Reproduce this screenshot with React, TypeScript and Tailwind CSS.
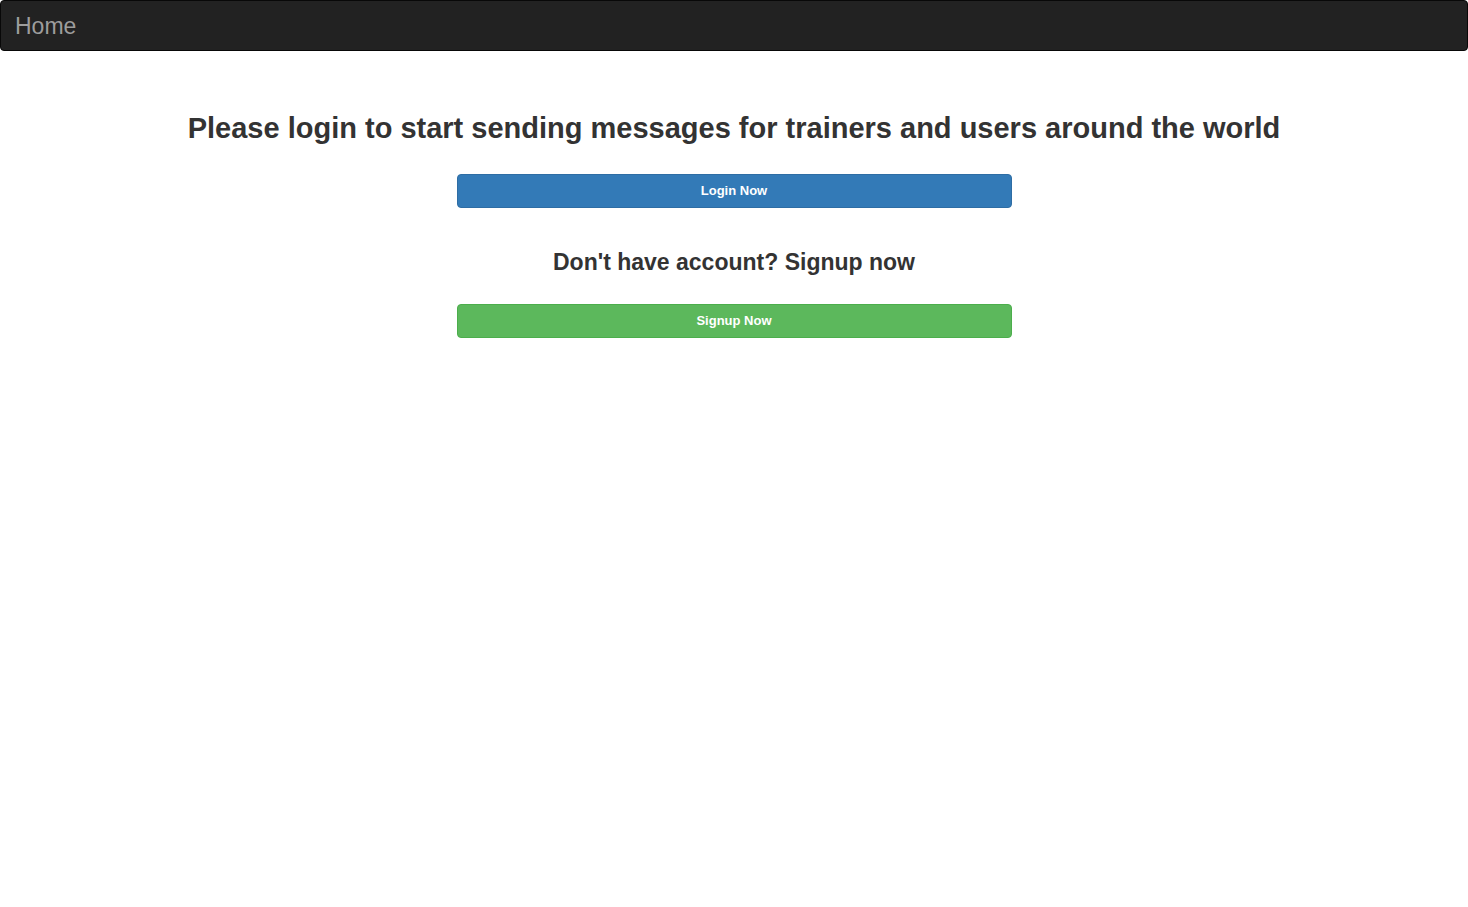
import React from "react";

export default function App() {
  return (
    <div className="min-h-screen bg-white text-[#333] font-['Liberation_Sans',Arial,sans-serif] text-[14px]">
      <nav className="h-[51px] bg-[#222] border border-[#080808] rounded-[4px] flex items-center">
        <a className="pl-[14px] text-[23px] leading-[20px] text-[#9d9d9d]">Home</a>
      </nav>
      <div className="flex flex-col items-center">
        <h2 className="mt-[61px] text-[29px] leading-[33px] font-bold text-center">
          Please login to start sending messages for trainers and users around the world
        </h2>
        <button className="mt-[29px] w-[555px] h-[34px] rounded-[4px] bg-[#337ab7] border border-[#2e6da4] text-white text-[13px] font-bold">
          Login Now
        </button>
        <h3 className="mt-[41px] text-[23px] leading-[26px] font-bold text-center">
          Don't have account? Signup now
        </h3>
        <button className="mt-[29px] w-[555px] h-[34px] rounded-[4px] bg-[#5cb85c] border border-[#4cae4c] text-white text-[13px] font-bold">
          Signup Now
        </button>
      </div>
    </div>
  );
}
